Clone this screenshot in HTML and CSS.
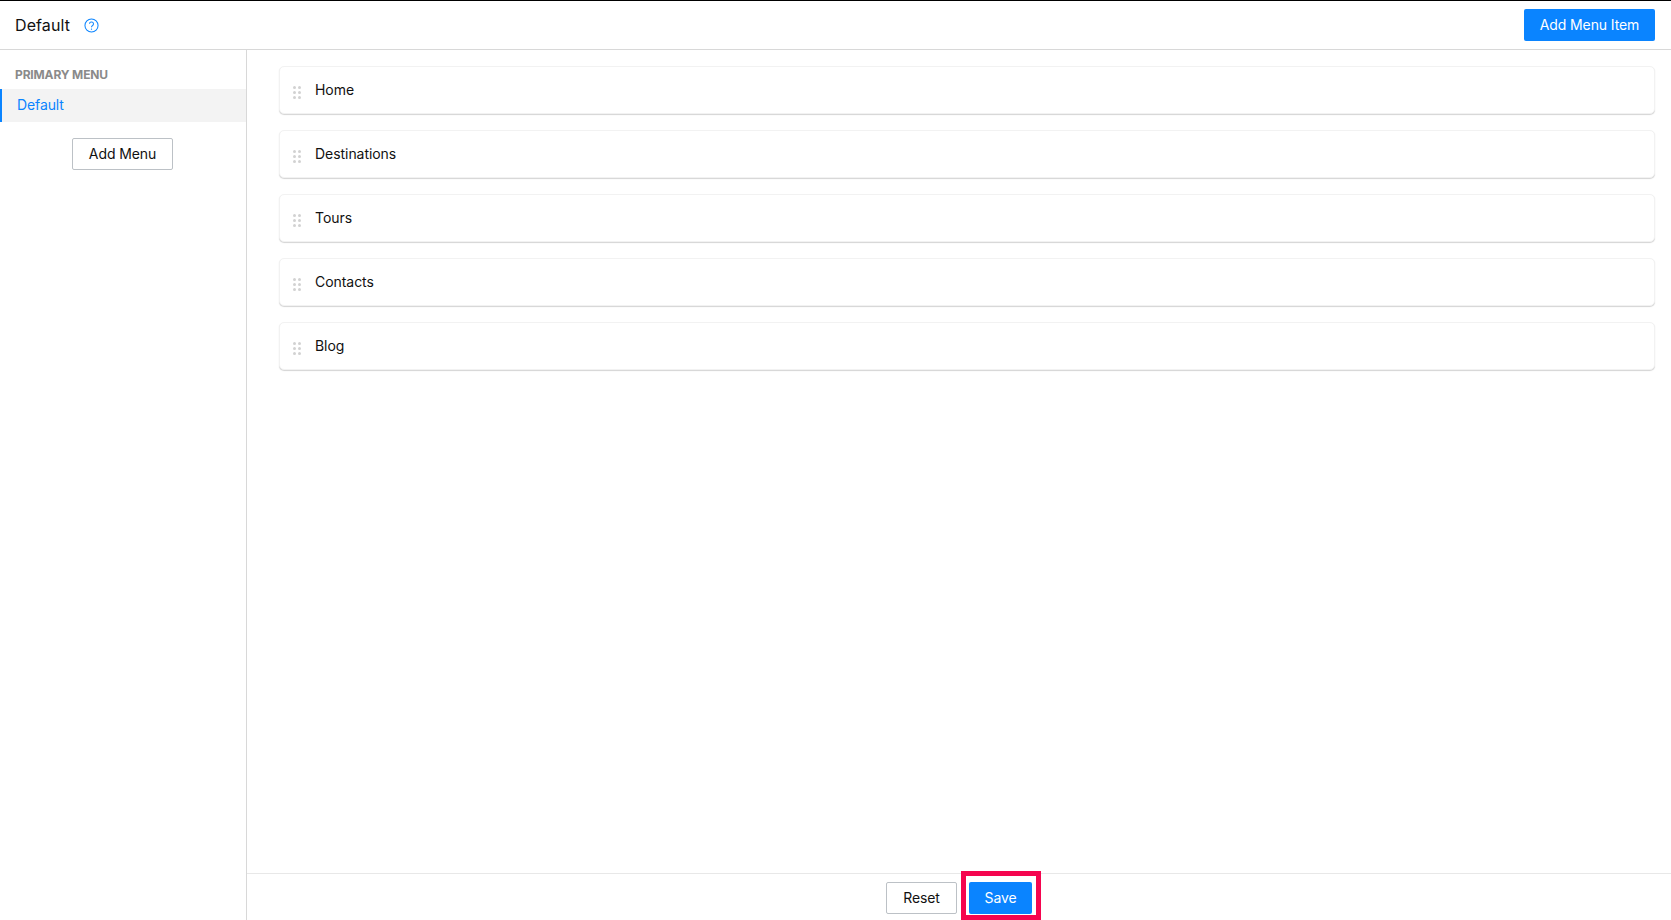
FILE: index.html
```html
<!DOCTYPE html>
<html lang="en">
<head>
    <meta charset="UTF-8">
    <title>Menus</title>
    <link rel="stylesheet" href="styles.css">
</head>
<body>
    <header class="top-bar">
        <div class="title-group">
            <h1>Default</h1>
            <svg class="help-icon" viewBox="0 0 16 16" width="15" height="15" fill="none" stroke="#0a84ff">
                <circle cx="8" cy="8" r="7" stroke-width="1.1"/>
                <path d="M5.9 6.2a2.1 2.1 0 1 1 3.3 1.8c-.8.5-1.2.9-1.2 1.8" stroke-width="1.1"/>
                <path d="M8 11.3v1.2" stroke-width="1.2"/>
            </svg>
        </div>
        <button class="btn btn-primary btn-add-item">Add Menu Item</button>
    </header>

    <div class="layout">
        <aside class="sidebar">
            <div class="sidebar-label">PRIMARY MENU</div>
            <div class="sidebar-item">Default</div>
            <div class="sidebar-action">
                <button class="btn btn-default btn-add-menu">Add Menu</button>
            </div>
        </aside>

        <main class="content">
            <div class="menu-list">
                <div class="menu-card"><span class="drag-handle"><i></i><i></i><i></i><i></i><i></i><i></i></span>Home</div>
                <div class="menu-card"><span class="drag-handle"><i></i><i></i><i></i><i></i><i></i><i></i></span>Destinations</div>
                <div class="menu-card"><span class="drag-handle"><i></i><i></i><i></i><i></i><i></i><i></i></span>Tours</div>
                <div class="menu-card"><span class="drag-handle"><i></i><i></i><i></i><i></i><i></i><i></i></span>Contacts</div>
                <div class="menu-card"><span class="drag-handle"><i></i><i></i><i></i><i></i><i></i><i></i></span>Blog</div>
            </div>
            <footer class="actions">
                <button class="btn btn-default btn-reset">Reset</button>
                <div class="highlight">
                    <button class="btn btn-primary btn-save">Save</button>
                </div>
            </footer>
        </main>
    </div>
</body>
</html>
```

FILE: styles.css
```css
* {
    box-sizing: border-box;
}
html, body {
    height: 100%;
}
body {
    margin: 0;
    display: flex;
    flex-direction: column;
    overflow: hidden;
    font-family: Inter, 'Liberation Sans', sans-serif;
    font-size: 14px;
    color: #111;
    background-color: #fff;
}
.top-bar {
    height: 50px;
    flex: none;
    display: flex;
    align-items: center;
    justify-content: space-between;
    padding: 0 16px 0 15px;
    border-top: 1px solid #000;
    border-bottom: 1px solid #d8d8d8;
}
.title-group {
    display: flex;
    align-items: center;
    gap: 14px;
}
h1 {
    margin: 0 0 1px;
    font-size: 16px;
    font-weight: 400;
    letter-spacing: 0.1px;
}
.help-icon {
    display: block;
}
.btn {
    height: 32px;
    padding: 0 0 2px;
    border-radius: 2px;
    font-family: inherit;
    font-size: 14px;
    letter-spacing: -0.1px;
    cursor: pointer;
}
.btn-primary {
    background-color: #0a84ff;
    border: none;
    color: #fff;
}
.btn-default {
    background-color: #fff;
    border: 1px solid #bcc1c6;
    color: #111;
}
.btn-add-item {
    width: 131px;
}
.layout {
    flex: 1;
    display: flex;
    min-height: 0;
}
.sidebar {
    width: 247px;
    flex: none;
    border-right: 1px solid #d8d8d8;
}
.sidebar-label {
    padding: 18px 0 0 15px;
    height: 39px;
    font-size: 12px;
    font-weight: 700;
    letter-spacing: -0.15px;
    color: #8a8a8a;
    line-height: 14px;
}
.sidebar-item {
    height: 33px;
    line-height: 32px;
    padding-left: 15px;
    letter-spacing: -0.1px;
    color: #0a84ff;
    border-left: 2px solid #0a84ff;
    background-color: #f3f3f3;
    background-image: radial-gradient(circle, #fcfcfc 0.5px, transparent 0.7px);
    background-size: 6px 6px;
}
.sidebar-action {
    display: flex;
    justify-content: center;
    padding: 16px 1px 0 0;
}
.btn-add-menu {
    width: 101px;
}
.content {
    flex: 1;
    display: flex;
    flex-direction: column;
    min-width: 0;
}
.menu-list {
    flex: 1;
    display: flex;
    flex-direction: column;
    gap: 16px;
    padding: 16px 16px 0 32px;
}
.menu-card {
    height: 48px;
    display: flex;
    align-items: center;
    padding: 0 0 1px 13px;
    letter-spacing: -0.05px;
    background-color: #fff;
    border: 1px solid #f2f2f2;
    border-radius: 5px;
    box-shadow: 0 1px 1px #d4d4d4;
}
.drag-handle {
    width: 8px;
    display: grid;
    grid-template-columns: 3px 3px;
    gap: 2px;
    margin: 5px 14px 0 0;
    flex: none;
}
.drag-handle i {
    height: 3px;
    background-color: #d2d2d2;
    border-radius: 50%;
}
.actions {
    height: 47px;
    flex: none;
    display: flex;
    justify-content: center;
    align-items: flex-start;
    gap: 4px;
    padding-left: 9px;
    border-top: 1px solid #e8e8e8;
}
.btn-reset {
    width: 71px;
    margin-top: 8px;
}
.highlight {
    margin-top: -3px;
    padding: 6px 4px 1px 3px;
    border: 5px solid #f5054f;
}
.btn-save {
    display: block;
    width: 63px;
}
```
